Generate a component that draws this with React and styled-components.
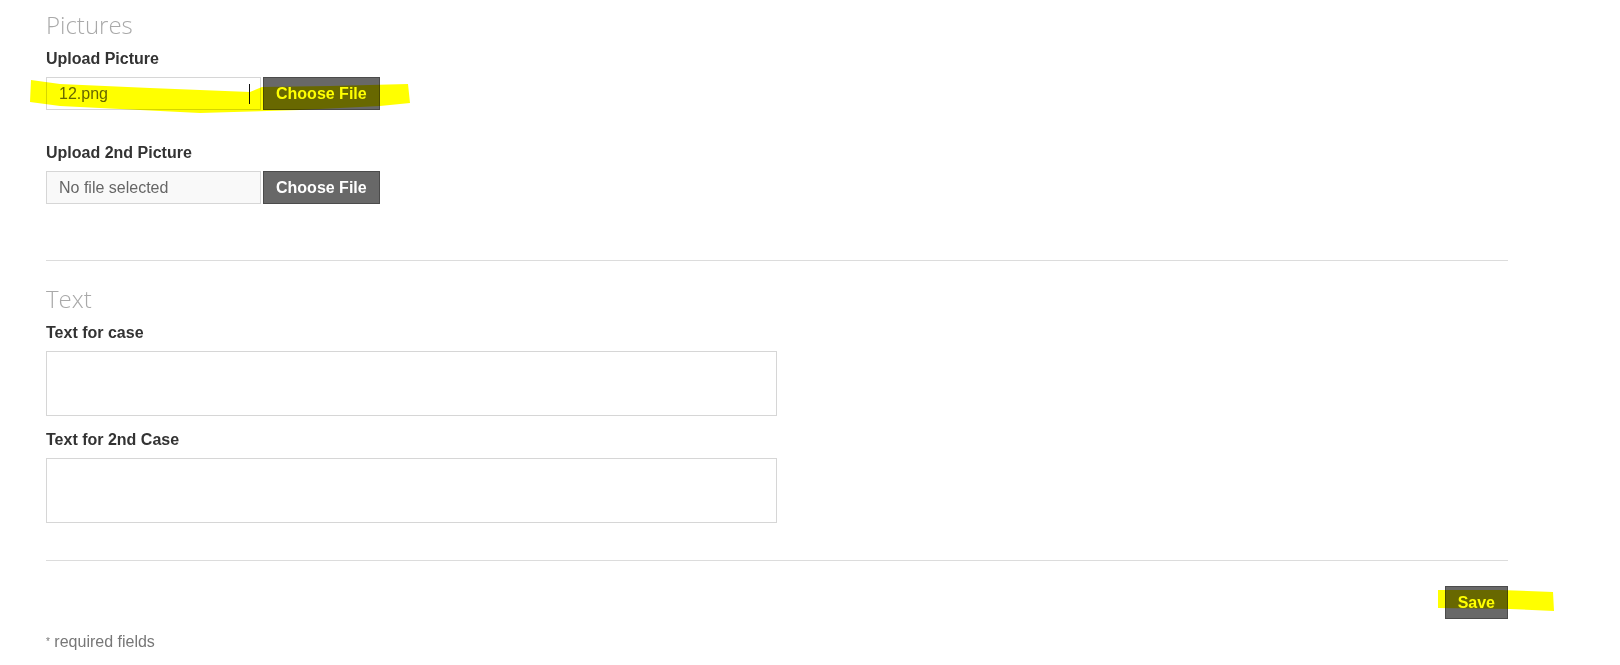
import React from 'react';
import styled, { createGlobalStyle } from 'styled-components';

const GlobalStyle = createGlobalStyle`
	body {
		margin: 0;
		background: #fff;
		font-family: "Liberation Sans", Arial, sans-serif;
	}
`;

const Wrapper = styled.div`
	position: relative;
	width: 1620px;
	height: 665px;
	overflow: hidden;
`;

const Page = styled.form`
	width: 1462px;
	padding: 10px 0 0 46px;
`;

const Heading = styled.h2`
	margin: ${props => (props.first ? '0' : '23px')} 0 11px;
	font-family: "Open Sans", sans-serif;
	font-weight: 300;
	font-size: 24px;
	line-height: 29px;
	color: #a9a9a9;
`;

const Label = styled.label`
	display: block;
	margin: ${props => props.spaced || 0}px 0 9px;
	font-weight: bold;
	font-size: 16px;
	line-height: 18px;
	color: #333;
`;

const FileRow = styled.div`
	display: flex;
	gap: 2px;
	margin-bottom: ${props => props.bottom || 0}px;
`;

const FileName = styled.div`
	position: relative;
	box-sizing: border-box;
	display: flex;
	align-items: center;
	width: 215px;
	height: 33px;
	padding: 0 12px;
	border: 1px solid #d6d6d6;
	background: ${props => (props.empty ? '#f9f9f9' : '#fff')};
	font-size: 16px;
	color: #666;
`;

const Caret = styled.span`
	position: absolute;
	right: 10px;
	top: 6px;
	width: 1px;
	height: 20px;
	background: #111;
`;

const Button = styled.button`
	box-sizing: border-box;
	height: 33px;
	padding: 0 12px;
	border: 1px solid #4b4b4b;
	background: #686868;
	color: #fff;
	font-family: "Liberation Sans", Arial, sans-serif;
	font-weight: bold;
	font-size: 16px;
	cursor: pointer;
`;

const Divider = styled.hr`
	margin: ${props => props.top}px 0 0;
	height: 1px;
	border: 0;
	background: #dcdcdc;
`;

const TextBox = styled.textarea`
	display: block;
	box-sizing: border-box;
	width: 731px;
	height: 65px;
	margin: 0;
	border: 1px solid #d6d6d6;
	resize: none;
	font-family: "Liberation Sans", Arial, sans-serif;
	font-size: 16px;
`;

const Actions = styled.div`
	display: flex;
	justify-content: flex-end;
	margin-top: 25px;
`;

const Footer = styled.p`
	margin: 14px 0 0;
	font-size: 16px;
	line-height: 18px;
	color: #777;
`;

const Star = styled.span`
	font-size: 10px;
	vertical-align: top;
`;

const Marker = styled.svg`
	position: absolute;
	top: 0;
	left: 0;
	pointer-events: none;
	mix-blend-mode: multiply;
`;

export default function App() {
	return (
		<Wrapper>
			<GlobalStyle />
			<Page onSubmit={e => e.preventDefault()}>
				{/* Pictures */}
				<Heading first>Pictures</Heading>
				<Label>Upload Picture</Label>
				<FileRow bottom={34}>
					<FileName>
						12.png
						<Caret />
					</FileName>
					<Button type='button'>Choose File</Button>
				</FileRow>
				<Label>Upload 2nd Picture</Label>
				<FileRow>
					<FileName empty>No file selected</FileName>
					<Button type='button'>Choose File</Button>
				</FileRow>

				<Divider top={56} />

				{/* Text */}
				<Heading>Text</Heading>
				<Label>Text for case</Label>
				<TextBox />
				<Label spaced={15}>Text for 2nd Case</Label>
				<TextBox />

				<Divider top={37} />

				<Actions>
					<Button type='submit'>Save</Button>
				</Actions>
				<Footer>
					<Star>*</Star> required fields
				</Footer>
			</Page>

			{/* highlighter strokes drawn over the screenshot */}
			<Marker width='1620' height='665' viewBox='0 0 1620 665'>
				<filter id='soft'>
					<feGaussianBlur stdDeviation='0.7' />
				</filter>
				<g fill='#ffff00' filter='url(#soft)'>
					<path d='M31 80 L60 84 L150 88 L250 92 L262 87 L330 86 L408 84 L410 103 L380 106 L300 110 L200 113 L120 109 L60 106 L30 102 Z' />
					<path d='M1438 590 L1500 590 L1553 592 L1554 611 L1510 609 L1438 608 Z' />
				</g>
			</Marker>
		</Wrapper>
	);
}
